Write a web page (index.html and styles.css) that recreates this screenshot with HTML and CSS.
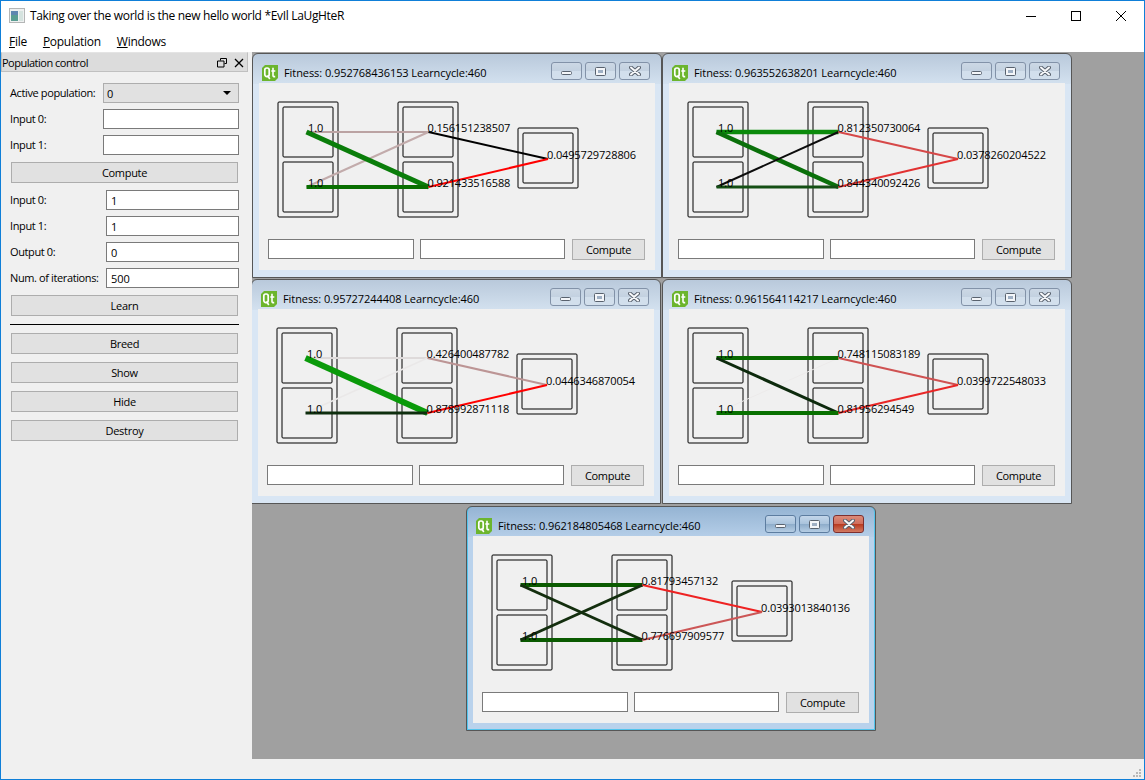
FILE: index.html
```html
<!DOCTYPE html>
<html lang="en">
<head>
    <meta charset="UTF-8">
    <title>Taking over the world is the new hello world *EvIl LaUgHteR</title>
    <link rel="stylesheet" href="styles.css">
</head>
<body>
    <svg class="defs" width="0" height="0">
        <defs>
            <g id="frames">
                <rect x="19" y="19" width="60" height="115" rx="1"/>
                <rect x="24" y="24" width="50" height="50" rx="1"/>
                <rect x="24" y="79" width="50" height="50" rx="1"/>
                <rect x="139" y="19" width="60" height="115" rx="1"/>
                <rect x="144" y="24" width="50" height="50" rx="1"/>
                <rect x="144" y="79" width="50" height="50" rx="1"/>
                <rect x="259" y="45" width="60" height="60" rx="1"/>
                <rect x="264" y="50" width="50" height="50" rx="1"/>
            </g>
            <g id="qt">
                <path d="M3 0h13v13l-3 3H0V3z" fill="#6cb52d"/>
                <rect x="2.800" y="3" width="4.400" height="8.600" rx="2" fill="none" stroke="#fff" stroke-width="1.700"/>
                <path d="M5.500 10.500L7.800 14M11 2.800V10.500c0 .9.500 1.200 2.200 1.100M9.300 6h4" fill="none" stroke="#fff" stroke-width="1.600"/>
            </g>
            <g id="btn-min"><rect x="0.500" y="0.500" width="10" height="3" rx="1" fill="#f4f6f9" stroke="#59626e"/></g>
            <g id="btn-max"><rect x="0.500" y="0.500" width="10" height="8" rx="1" fill="#f4f6f9" stroke="#59626e"/><rect x="3" y="3" width="5" height="3" fill="#9fb0c4"/></g>
            <g id="btn-close"><path d="M2 1.500L10 8.500M10 1.500L2 8.500" stroke="#59626e" stroke-width="4" stroke-linecap="round"/><path d="M2 1.500L10 8.500M10 1.500L2 8.500" stroke="#f8f9fb" stroke-width="2" stroke-linecap="round"/></g>
        </defs>
    </svg>

    <div class="app">
        <header class="titlebar">
            <svg class="app-icon" width="16" height="15" viewBox="0 0 16 15">
                <rect x="0.500" y="0.500" width="15" height="14" fill="#eef0f0" stroke="#b4b6b6"/>
                <rect x="2" y="3" width="7" height="10" fill="#5a9d92"/>
                <rect x="2" y="3" width="7" height="4" fill="#5f86b0"/>
                <rect x="10" y="3" width="4" height="10" fill="#d5e3df"/>
            </svg>
            <span class="app-title">Taking over the world is the new hello world *EvIl LaUgHteR</span>
            <div class="caption">
                <span class="caption-btn"><svg width="10" height="10"><path d="M0 5.500H10" stroke="#000"/></svg></span>
                <span class="caption-btn"><svg width="10" height="10"><rect x="0.500" y="0.500" width="9" height="9" fill="none" stroke="#000"/></svg></span>
                <span class="caption-btn"><svg width="10" height="10"><path d="M0 0L10 10M10 0L0 10" stroke="#000"/></svg></span>
            </div>
        </header>

        <nav class="menubar">
            <span class="menu-item item-file"><u>F</u>ile</span>
            <span class="menu-item item-population"><u>P</u>opulation</span>
            <span class="menu-item item-windows"><u>W</u>indows</span>
        </nav>

        <div class="workspace">
            <aside class="dock">
                <div class="dock-head">
                    <span class="dock-title">Population control</span>
                    <svg class="dock-float" width="10" height="10"><path d="M3.500 2.500V.5h6v5h-2M.5 3h6.500v6H.5z" fill="none" stroke="#000"/></svg>
                    <svg class="dock-close" width="10" height="10"><path d="M1 1L9 9M9 1L1 9" stroke="#000" stroke-width="1.300"/></svg>
                </div>
                <div class="dock-body">
                    <div class="form form-top">
                        <label>Active population:</label>
                        <div class="combo">0<span class="combo-arrow"></span></div>
                        <label>Input 0:</label>
                        <input class="field" type="text">
                        <label>Input 1:</label>
                        <input class="field" type="text">
                    </div>
                    <button class="btn">Compute</button>
                    <div class="form form-learn">
                        <label>Input 0:</label>
                        <input class="field" type="text" value="1">
                        <label>Input 1:</label>
                        <input class="field" type="text" value="1">
                        <label>Output 0:</label>
                        <input class="field" type="text" value="0">
                        <label>Num. of iterations:</label>
                        <input class="field" type="text" value="500">
                    </div>
                    <button class="btn">Learn</button>
                    <div class="divider"></div>
                    <div class="actions">
                        <button class="btn">Breed</button>
                        <button class="btn">Show</button>
                        <button class="btn">Hide</button>
                        <button class="btn">Destroy</button>
                    </div>
                </div>
            </aside>

            <main class="mdi">
                <section class="win win-1">
                    <div class="win-head">
                        <svg class="qt" width="16" height="16"><use href="#qt"/></svg>
                        <span class="win-title">Fitness: 0.952768436153 Learncycle:460</span>
                        <div class="win-btns">
                            <span class="win-btn"><svg width="11" height="4" class="min"><use href="#btn-min"/></svg></span>
                            <span class="win-btn"><svg width="11" height="9"><use href="#btn-max"/></svg></span>
                            <span class="win-btn"><svg width="12" height="10"><use href="#btn-close"/></svg></span>
                        </div>
                    </div>
                    <div class="win-body">
                        <svg class="net" width="396" height="156">
                            <use class="frame" href="#frames"/>
                            <line x1="47.500" y1="49" x2="169.500" y2="49" stroke="#bba3a3" stroke-width="2"/>
                            <line x1="47.500" y1="104" x2="169.500" y2="49" stroke="#c2abab" stroke-width="2"/>
                            <line x1="47.500" y1="49" x2="169.500" y2="104" stroke="#0a7d0a" stroke-width="5"/>
                            <line x1="47.500" y1="104" x2="169.500" y2="104" stroke="#086e00" stroke-width="4"/>
                            <line x1="169.500" y1="49" x2="289" y2="76" stroke="#000" stroke-width="2"/>
                            <line x1="169.500" y1="104" x2="289" y2="76" stroke="#f00" stroke-width="2"/>
                            <text x="49" y="49">1.0</text>
                            <text x="49" y="104">1.0</text>
                            <text x="168.500" y="49">0.156151238507</text>
                            <text x="168.500" y="104">0.921433516588</text>
                            <text x="288" y="76">0.0495729728806</text>
                        </svg>
                        <div class="win-inputs">
                            <input class="field f-a" type="text">
                            <input class="field f-b" type="text">
                            <button class="btn f-c">Compute</button>
                        </div>
                    </div>
                </section>

                <section class="win win-2">
                    <div class="win-head">
                        <svg class="qt" width="16" height="16"><use href="#qt"/></svg>
                        <span class="win-title">Fitness: 0.963552638201 Learncycle:460</span>
                        <div class="win-btns">
                            <span class="win-btn"><svg width="11" height="4" class="min"><use href="#btn-min"/></svg></span>
                            <span class="win-btn"><svg width="11" height="9"><use href="#btn-max"/></svg></span>
                            <span class="win-btn"><svg width="12" height="10"><use href="#btn-close"/></svg></span>
                        </div>
                    </div>
                    <div class="win-body">
                        <svg class="net" width="396" height="156">
                            <use class="frame" href="#frames"/>
                            <line x1="47.500" y1="49" x2="169.500" y2="49" stroke="#0b8a0b" stroke-width="4.500"/>
                            <line x1="47.500" y1="49" x2="169.500" y2="104" stroke="#0a700a" stroke-width="4.500"/>
                            <line x1="47.500" y1="104" x2="169.500" y2="49" stroke="#0c0c0c" stroke-width="2"/>
                            <line x1="47.500" y1="104" x2="169.500" y2="104" stroke="#144f14" stroke-width="3"/>
                            <line x1="169.500" y1="49" x2="289" y2="76" stroke="#d64848" stroke-width="2"/>
                            <line x1="169.500" y1="104" x2="289" y2="76" stroke="#e23232" stroke-width="2"/>
                            <text x="49" y="49">1.0</text>
                            <text x="49" y="104">1.0</text>
                            <text x="168.500" y="49">0.812350730064</text>
                            <text x="168.500" y="104">0.844340092426</text>
                            <text x="288" y="76">0.0378260204522</text>
                        </svg>
                        <div class="win-inputs">
                            <input class="field f-a" type="text">
                            <input class="field f-b" type="text">
                            <button class="btn f-c">Compute</button>
                        </div>
                    </div>
                </section>

                <section class="win win-3">
                    <div class="win-head">
                        <svg class="qt" width="16" height="16"><use href="#qt"/></svg>
                        <span class="win-title">Fitness: 0.95727244408 Learncycle:460</span>
                        <div class="win-btns">
                            <span class="win-btn"><svg width="11" height="4" class="min"><use href="#btn-min"/></svg></span>
                            <span class="win-btn"><svg width="11" height="9"><use href="#btn-max"/></svg></span>
                            <span class="win-btn"><svg width="12" height="10"><use href="#btn-close"/></svg></span>
                        </div>
                    </div>
                    <div class="win-body">
                        <svg class="net" width="396" height="156">
                            <use class="frame" href="#frames"/>
                            <line x1="47.500" y1="49" x2="169.500" y2="49" stroke="#dedada" stroke-width="2"/>
                            <line x1="47.500" y1="104" x2="169.500" y2="49" stroke="#eae8e8" stroke-width="1.500"/>
                            <line x1="47.500" y1="49" x2="169.500" y2="104" stroke="#0a9a0a" stroke-width="6"/>
                            <line x1="47.500" y1="104" x2="169.500" y2="104" stroke="#0e2e0e" stroke-width="3"/>
                            <line x1="169.500" y1="49" x2="289" y2="76" stroke="#bc9595" stroke-width="2"/>
                            <line x1="169.500" y1="104" x2="289" y2="76" stroke="#f00" stroke-width="2"/>
                            <text x="49" y="49">1.0</text>
                            <text x="49" y="104">1.0</text>
                            <text x="168.500" y="49">0.426400487782</text>
                            <text x="168.500" y="104">0.878992871118</text>
                            <text x="288" y="76">0.0446346870054</text>
                        </svg>
                        <div class="win-inputs">
                            <input class="field f-a" type="text">
                            <input class="field f-b" type="text">
                            <button class="btn f-c">Compute</button>
                        </div>
                    </div>
                </section>

                <section class="win win-4">
                    <div class="win-head">
                        <svg class="qt" width="16" height="16"><use href="#qt"/></svg>
                        <span class="win-title">Fitness: 0.961564114217 Learncycle:460</span>
                        <div class="win-btns">
                            <span class="win-btn"><svg width="11" height="4" class="min"><use href="#btn-min"/></svg></span>
                            <span class="win-btn"><svg width="11" height="9"><use href="#btn-max"/></svg></span>
                            <span class="win-btn"><svg width="12" height="10"><use href="#btn-close"/></svg></span>
                        </div>
                    </div>
                    <div class="win-body">
                        <svg class="net" width="396" height="156">
                            <use class="frame" href="#frames"/>
                            <line x1="47.500" y1="104" x2="169.500" y2="49" stroke="#eceaea" stroke-width="1"/>
                            <line x1="47.500" y1="49" x2="169.500" y2="49" stroke="#086a00" stroke-width="4"/>
                            <line x1="47.500" y1="49" x2="169.500" y2="104" stroke="#0d2a0d" stroke-width="3"/>
                            <line x1="47.500" y1="104" x2="169.500" y2="104" stroke="#087000" stroke-width="4"/>
                            <line x1="169.500" y1="49" x2="289" y2="76" stroke="#cf5252" stroke-width="2"/>
                            <line x1="169.500" y1="104" x2="289" y2="76" stroke="#e82626" stroke-width="2"/>
                            <text x="49" y="49">1.0</text>
                            <text x="49" y="104">1.0</text>
                            <text x="168.500" y="49">0.748115083189</text>
                            <text x="168.500" y="104">0.81956294549</text>
                            <text x="288" y="76">0.0399722548033</text>
                        </svg>
                        <div class="win-inputs">
                            <input class="field f-a" type="text">
                            <input class="field f-b" type="text">
                            <button class="btn f-c">Compute</button>
                        </div>
                    </div>
                </section>

                <section class="win win-5 active">
                    <div class="win-head">
                        <svg class="qt" width="16" height="16"><use href="#qt"/></svg>
                        <span class="win-title">Fitness: 0.962184805468 Learncycle:460</span>
                        <div class="win-btns">
                            <span class="win-btn"><svg width="11" height="4" class="min"><use href="#btn-min"/></svg></span>
                            <span class="win-btn"><svg width="11" height="9"><use href="#btn-max"/></svg></span>
                            <span class="win-btn btn-red"><svg width="12" height="10"><use href="#btn-close"/></svg></span>
                        </div>
                    </div>
                    <div class="win-body">
                        <svg class="net" width="396" height="156">
                            <use class="frame" href="#frames"/>
                            <line x1="47.500" y1="49" x2="169.500" y2="49" stroke="#0a5a00" stroke-width="4"/>
                            <line x1="47.500" y1="104" x2="169.500" y2="104" stroke="#0a5a00" stroke-width="4"/>
                            <line x1="47.500" y1="49" x2="169.500" y2="104" stroke="#132e0e" stroke-width="3"/>
                            <line x1="47.500" y1="104" x2="169.500" y2="49" stroke="#132e0e" stroke-width="3"/>
                            <line x1="169.500" y1="49" x2="289" y2="76" stroke="#ee2222" stroke-width="2"/>
                            <line x1="169.500" y1="104" x2="289" y2="76" stroke="#cc5656" stroke-width="2"/>
                            <text x="49" y="49">1.0</text>
                            <text x="49" y="104">1.0</text>
                            <text x="168.500" y="49">0.81793457132</text>
                            <text x="168.500" y="104">0.776697909577</text>
                            <text x="288" y="76">0.0393013840136</text>
                        </svg>
                        <div class="win-inputs">
                            <input class="field f-a" type="text">
                            <input class="field f-b" type="text">
                            <button class="btn f-c">Compute</button>
                        </div>
                    </div>
                </section>
            </main>
        </div>

        <footer class="statusbar">
            <svg width="8" height="8" viewBox="0 0 8 8" fill="#b8b8b8">
                <rect x="6" y="0" width="2" height="2"/>
                <rect x="3" y="3" width="2" height="2"/>
                <rect x="6" y="3" width="2" height="2"/>
                <rect x="0" y="6" width="2" height="2"/>
                <rect x="3" y="6" width="2" height="2"/>
                <rect x="6" y="6" width="2" height="2"/>
            </svg>
        </footer>
    </div>
</body>
</html>
```

FILE: styles.css
```css
html, body {
    margin: 0;
    padding: 0;
    height: 100%;
}
body {
    font-family: "Open Sans", "Noto Sans", sans-serif;
    font-size: 11px;
    letter-spacing: -0.1px;
    color: #000;
    overflow: hidden;
}
.defs {
    position: absolute;
}
.app {
    box-sizing: border-box;
    width: 1145px;
    height: 780px;
    border: 1px solid #0f7fd8;
    display: flex;
    flex-direction: column;
    background: #fff;
}

/* title bar */
.titlebar {
    height: 29px;
    display: flex;
    align-items: center;
    padding-left: 8px;
    flex: none;
    font-size: 12px;
    letter-spacing: -0.33px;
}
.app-icon {
    flex: none;
}
.app-title {
    margin-left: 5px;
}
.caption {
    margin-left: auto;
    margin-right: 1px;
    display: flex;
}
.caption-btn {
    width: 45px;
    height: 29px;
    display: flex;
    align-items: center;
    justify-content: center;
}

/* menu */
.menubar {
    height: 22px;
    display: flex;
    align-items: center;
    flex: none;
    font-size: 12px;
    letter-spacing: -0.28px;
}
.item-file { margin-left: 8px; }
.item-population { margin-left: 16px; }
.item-windows { margin-left: 16px; }

.workspace {
    flex: 1;
    display: flex;
    min-height: 0;
}

/* dock */
.dock {
    width: 251px;
    flex: none;
    background: #f0f0f0;
    display: flex;
    flex-direction: column;
}
.dock-head {
    box-sizing: border-box;
    height: 20px;
    width: 247px;
    background: #dcdcdc;
    border: 1px solid #c0c0c0;
    border-top-color: #e4e4e4;
    display: flex;
    align-items: center;
    padding-top: 1px;
}
.dock-title {
    letter-spacing: -0.5px;
}
.dock-float {
    margin-left: auto;
}
.dock-close {
    margin: 0 3px 0 7px;
}
.dock-body {
    display: flex;
    flex-direction: column;
    padding: 11px 13px 0 9px;
}
.form {
    display: grid;
    row-gap: 6px;
    grid-auto-rows: 20px;
    align-items: center;
}
label {
    white-space: nowrap;
    letter-spacing: -0.38px;
    padding-bottom: 2px;
}
.form-top {
    grid-template-columns: 93px 136px;
    margin-bottom: 7px;
}
.form-learn {
    grid-template-columns: 96px 133px;
    margin-top: 7px;
    margin-bottom: 7px;
}
.combo {
    box-sizing: border-box;
    height: 20px;
    background: #e1e1e1;
    border: 1px solid #adadad;
    display: flex;
    align-items: center;
    padding-left: 3px;
}
.combo-arrow {
    margin-left: auto;
    margin-right: 7px;
    width: 0;
    height: 0;
    border: 4px solid transparent;
    border-top: 4px solid #000;
    border-bottom: 0;
}
.field {
    box-sizing: border-box;
    height: 20px;
    width: 100%;
    margin: 0;
    padding: 0 4px;
    border: 1px solid #7a7a7a;
    border-radius: 0;
    background: #fff;
    font: inherit;
    letter-spacing: inherit;
    color: #000;
    outline: none;
}
.btn {
    box-sizing: border-box;
    height: 21px;
    margin: 0;
    padding: 0;
    background: #e1e1e1;
    border: 1px solid #adadad;
    border-radius: 0;
    font: inherit;
    letter-spacing: -0.3px;
    color: #000;
}
.dock-body > .btn {
    margin-left: 1px;
    width: 227px;
}
.divider {
    height: 1px;
    width: 229px;
    background: #000;
    margin: 8px 0;
}
.actions {
    display: flex;
    flex-direction: column;
    gap: 8px;
    margin-left: 1px;
    width: 227px;
}

/* mdi area */
.mdi {
    flex: 1;
    background: #a0a0a0;
    position: relative;
    overflow: hidden;
}
.win {
    position: absolute;
    box-sizing: border-box;
    width: 410px;
    height: 225px;
    border: 1px solid #565656;
    border-radius: 6px 6px 0 0;
    background: linear-gradient(#b9c9db 0, #d3e1ef 30px, #d9e6f4 30px);
    padding: 0 6px 7px;
    display: flex;
    flex-direction: column;
}
.win-1 { left: 0; top: 1px; }
.win-2 { left: 410px; top: 1px; }
.win-3 { left: -1px; top: 227px; }
.win-4 { left: 410px; top: 227px; }
.win-5 { left: 214px; top: 454px; }
.active {
    background: linear-gradient(#95b4d3 0, #b5cee8 30px, #b9d2ec 30px);
    box-shadow: inset 1px 0 #52c4ec, inset -1px 0 #52c4ec, inset 0 -1px #52c4ec;
}
.win-head {
    height: 29px;
    flex: none;
    display: flex;
    align-items: center;
    padding-left: 3px;
}
.qt {
    flex: none;
    margin-top: 9px;
}
.win-title {
    margin-left: 6px;
    margin-top: 8px;
    letter-spacing: -0.07px;
}
.win-btns {
    margin-left: auto;
    margin-right: 5px;
    margin-top: 5px;
    display: flex;
    gap: 3px;
}
.win-btn {
    box-sizing: border-box;
    width: 31px;
    height: 18px;
    border: 1px solid #8292a8;
    border-radius: 3px;
    background: linear-gradient(#ccd8e5 0, #c3d1e0 50%, #d2dfec 51%);
    display: flex;
    align-items: center;
    justify-content: center;
}
.active .win-btn {
    border-color: #5d7da0;
    background: linear-gradient(#c3d6ea 0, #a9c3dc 50%, #8dacca 51%, #b5cde4);
}
.active .btn-red {
    border-color: #7d2f2f;
    background: linear-gradient(#dc8a78 0, #cf6d5c 50%, #b8391f 51%, #d27a62);
}
.min {
    margin-top: 3px;
}
.win-body {
    width: 396px;
    height: 187px;
    background: #f0f0f0;
    flex: none;
}
.net {
    display: block;
}
.frame {
    fill: none;
    stroke: #000;
    stroke-width: 1;
}
.net text {
    font-size: 11px;
    letter-spacing: -0.14px;
    fill: #000;
}
.win-inputs {
    display: flex;
    align-items: flex-start;
    padding-left: 9px;
}
.f-a {
    width: 146px;
}
.f-b {
    width: 145px;
    margin-left: 6px;
}
.f-c {
    width: 73px;
    margin-left: 7px;
}

.statusbar {
    height: 20px;
    flex: none;
    background: #f0f0f0;
    display: flex;
    justify-content: flex-end;
    align-items: flex-end;
    padding: 0 3px 2px 0;
    box-sizing: border-box;
}
```
